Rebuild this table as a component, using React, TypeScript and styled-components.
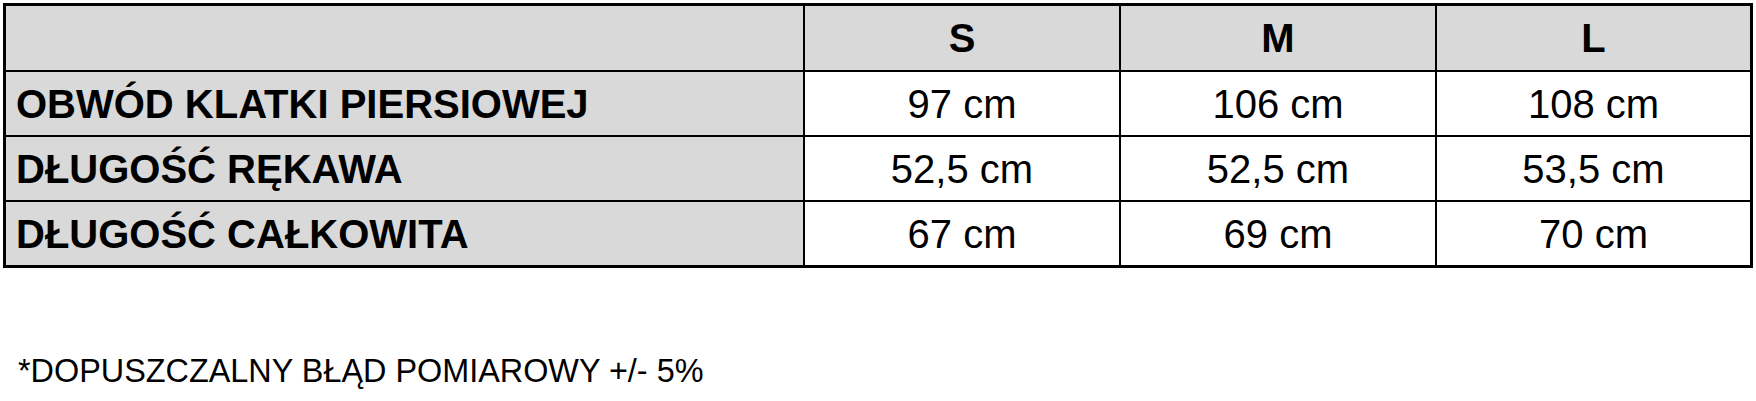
import styled, { createGlobalStyle } from "styled-components";

const GlobalStyle = createGlobalStyle`
  html, body {
    margin: 0;
    padding: 0;
    background: #ffffff;
  }
  body {
    font-family: "Liberation Sans", Arial, sans-serif;
    color: #000000;
  }
`;

const Page = styled.div`
  padding: 3px 0 0 3px;
  width: 1756px;
  height: 401px;
  box-sizing: border-box;
`;

const Grid = styled.div`
  display: grid;
  grid-template-columns: 797px 314px 314px 313px;
  grid-template-rows: 64px 63px 63px 63px;
  gap: 2px;
  padding: 3px;
  width: max-content;
  background: #000000;
`;

const Cell = styled.div<{ $gray?: boolean; $bold?: boolean; $left?: boolean }>`
  display: flex;
  align-items: center;
  justify-content: ${(p) => (p.$left ? "flex-start" : "center")};
  padding-left: ${(p) => (p.$left ? "10px" : "0")};
  background: ${(p) => (p.$gray ? "#d9d9d9" : "#ffffff")};
  font-size: 40px;
  line-height: 46px;
  font-weight: ${(p) => (p.$bold ? 700 : 400)};
`;

const Note = styled.p`
  margin: 85px 0 0 15px;
  font-size: 32.4px;
  line-height: 37px;
`;

const sizes = ["S", "M", "L"];

const rows = [
  { label: "OBWÓD KLATKI PIERSIOWEJ", values: ["97 cm", "106 cm", "108 cm"] },
  { label: "DŁUGOŚĆ RĘKAWA", values: ["52,5 cm", "52,5 cm", "53,5 cm"] },
  { label: "DŁUGOŚĆ CAŁKOWITA", values: ["67 cm", "69 cm", "70 cm"] },
];

function App() {
  return (
    <Page>
      <GlobalStyle />
      <Grid>
        <Cell $gray />
        {sizes.map((s) => (
          <Cell key={s} $gray $bold>
            {s}
          </Cell>
        ))}
        {rows.map((row) => [
          <Cell key={row.label} $gray $bold $left>
            {row.label}
          </Cell>,
          ...row.values.map((v, i) => <Cell key={row.label + i}>{v}</Cell>),
        ])}
      </Grid>
      <Note>*DOPUSZCZALNY BŁĄD POMIAROWY +/- 5%</Note>
    </Page>
  );
}

export default App;
